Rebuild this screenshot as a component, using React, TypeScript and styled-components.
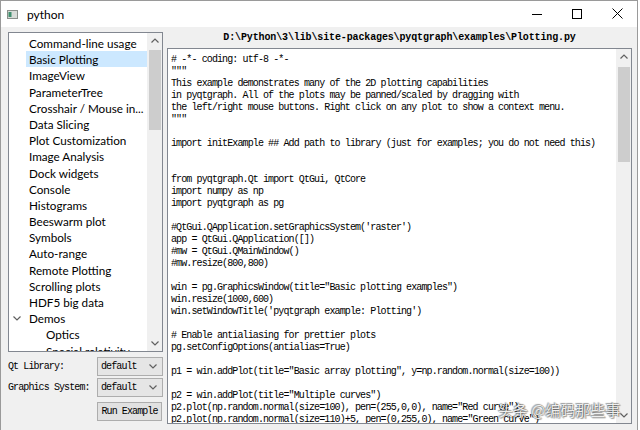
import React from 'react';
import styled, { createGlobalStyle } from 'styled-components';

const GlobalStyle = createGlobalStyle`
  html, body {
    margin: 0;
    padding: 0;
    background: #ffffff;
    overflow: hidden;
  }
`;

const treeItems = [
  { label: 'Command-line usage', depth: 0 },
  { label: 'Basic Plotting', depth: 0, selected: true },
  { label: 'ImageView', depth: 0 },
  { label: 'ParameterTree', depth: 0 },
  { label: 'Crosshair / Mouse in...', depth: 0 },
  { label: 'Data Slicing', depth: 0 },
  { label: 'Plot Customization', depth: 0 },
  { label: 'Image Analysis', depth: 0 },
  { label: 'Dock widgets', depth: 0 },
  { label: 'Console', depth: 0 },
  { label: 'Histograms', depth: 0 },
  { label: 'Beeswarm plot', depth: 0 },
  { label: 'Symbols', depth: 0 },
  { label: 'Auto-range', depth: 0 },
  { label: 'Remote Plotting', depth: 0 },
  { label: 'Scrolling plots', depth: 0 },
  { label: 'HDF5 big data', depth: 0 },
  { label: 'Demos', depth: 0, expanded: true },
  { label: 'Optics', depth: 1 },
  { label: 'Special relativity', depth: 1 },
];

const codeLines = [
  '# -*- coding: utf-8 -*-',
  '"""',
  'This example demonstrates many of the 2D plotting capabilities',
  'in pyqtgraph. All of the plots may be panned/scaled by dragging with',
  'the left/right mouse buttons. Right click on any plot to show a context menu.',
  '"""',
  '',
  'import initExample ## Add path to library (just for examples; you do not need this)',
  '',
  '',
  'from pyqtgraph.Qt import QtGui, QtCore',
  'import numpy as np',
  'import pyqtgraph as pg',
  '',
  "#QtGui.QApplication.setGraphicsSystem('raster')",
  'app = QtGui.QApplication([])',
  '#mw = QtGui.QMainWindow()',
  '#mw.resize(800,800)',
  '',
  'win = pg.GraphicsWindow(title="Basic plotting examples")',
  'win.resize(1000,600)',
  "win.setWindowTitle('pyqtgraph example: Plotting')",
  '',
  '# Enable antialiasing for prettier plots',
  'pg.setConfigOptions(antialias=True)',
  '',
  'p1 = win.addPlot(title="Basic array plotting", y=np.random.normal(size=100))',
  '',
  'p2 = win.addPlot(title="Multiple curves")',
  'p2.plot(np.random.normal(size=100), pen=(255,0,0), name="Red curve")',
  'p2.plot(np.random.normal(size=110)+5, pen=(0,255,0), name="Green curve")',
];

const Chevron = ({ up }: { up?: boolean }) => (
  <svg width="8" height="5" viewBox="0 0 8 5">
    <polyline
      points={up ? '0.5,4.5 4,1 7.5,4.5' : '0.5,0.5 4,4 7.5,0.5'}
      fill="none"
      stroke="#606060"
      strokeWidth="1.2"
    />
  </svg>
);

const ScrollBar = ({ thumbTop, thumbHeight }: { thumbTop: number; thumbHeight: number }) => (
  <Scroll>
    <ScrollArrow>
      <Chevron up />
    </ScrollArrow>
    <Track>
      <Thumb style={{ marginTop: thumbTop, height: thumbHeight }} />
    </Track>
    <ScrollArrow>
      <Chevron />
    </ScrollArrow>
  </Scroll>
);

export default function App() {
  return (
    <>
      <GlobalStyle />
      <Frame>
        <TitleBar>
          <AppIcon width="11" height="9" viewBox="0 0 11 9">
            <rect x="0.5" y="0.5" width="10" height="8" fill="#d8dcd8" stroke="#8a8f8a" />
            <rect x="1.5" y="2" width="3" height="5" fill="#3f8f6f" />
          </AppIcon>
          <Title>python</Title>
          <Controls>
            <CtrlButton>
              <svg width="10" height="10" viewBox="0 0 10 10">
                <line x1="0" y1="5.5" x2="10" y2="5.5" stroke="#000" strokeWidth="1" />
              </svg>
            </CtrlButton>
            <CtrlButton>
              <svg width="10" height="10" viewBox="0 0 10 10">
                <rect x="0.5" y="0.5" width="9" height="9" fill="none" stroke="#000" strokeWidth="1" />
              </svg>
            </CtrlButton>
            <CtrlButton>
              <svg width="11" height="11" viewBox="0 0 11 11">
                <line x1="0.5" y1="0.5" x2="10.5" y2="10.5" stroke="#000" strokeWidth="1" />
                <line x1="10.5" y1="0.5" x2="0.5" y2="10.5" stroke="#000" strokeWidth="1" />
              </svg>
            </CtrlButton>
          </Controls>
        </TitleBar>
        <Body>
          <Sidebar>
            <Tree>
              <TreeList>
                {treeItems.map((item) => (
                  <TreeRow key={item.label} $depth={item.depth}>
                    <Branch>{item.expanded && <Chevron />}</Branch>
                    <TreeLabel $selected={!!item.selected}>{item.label}</TreeLabel>
                  </TreeRow>
                ))}
              </TreeList>
              <ScrollBar thumbTop={2} thumbHeight={80} />
            </Tree>
            <FormRow $gap={5}>
              <FieldLabel>Qt Library:</FieldLabel>
              <Combo>
                default
                <Chevron />
              </Combo>
            </FormRow>
            <FormRow $gap={2}>
              <FieldLabel>Graphics System:</FieldLabel>
              <Combo>
                default
                <Chevron />
              </Combo>
            </FormRow>
            <RunButton>Run Example</RunButton>
          </Sidebar>
          <Main>
            <PathHeader>D:\Python\3\lib\site-packages\pyqtgraph\examples\Plotting.py</PathHeader>
            <Editor>
              <Code>
                {codeLines.map((line, i) => (
                  <CodeLine key={i}>{line}</CodeLine>
                ))}
              </Code>
              <ScrollBar thumbTop={3} thumbHeight={95} />
            </Editor>
          </Main>
        </Body>
        <Watermark>头条 @编码那些事</Watermark>
      </Frame>
    </>
  );
}

const Frame = styled.div`
  position: relative;
  width: 638px;
  height: 430px;
  box-sizing: border-box;
  border: 1px solid #9a9a9a;
  border-bottom: none;
  display: flex;
  flex-direction: column;
  background: #f0f0f0;
  overflow: hidden;
`;

const TitleBar = styled.div`
  height: 26px;
  flex-shrink: 0;
  background: #ffffff;
  display: flex;
  align-items: center;
  padding-left: 6px;
`;

const AppIcon = styled.svg`
  margin-right: 9px;
  margin-top: 1px;
`;

const Title = styled.span`
  font-family: Lato, 'Noto Sans', sans-serif;
  font-size: 12px;
  color: #000;
`;

const Controls = styled.div`
  margin-left: auto;
  display: flex;
  height: 100%;
`;

const CtrlButton = styled.div`
  width: 40px;
  display: flex;
  align-items: center;
  justify-content: center;
  margin-top: -1px;
`;

const Body = styled.div`
  flex: 1;
  display: flex;
  gap: 4px;
  padding: 0 5px 6px 7px;
  min-height: 0;
`;

const Sidebar = styled.div`
  width: 155px;
  flex-shrink: 0;
  padding-top: 5px;
  display: flex;
  flex-direction: column;
`;

const Tree = styled.div`
  height: 320px;
  box-sizing: border-box;
  border: 1px solid #828790;
  background: #ffffff;
  display: flex;
`;

const TreeList = styled.div`
  flex: 1;
  padding-top: 2px;
  overflow: hidden;
`;

const TreeRow = styled.div<{ $depth: number }>`
  height: 16.2px;
  display: flex;
  padding-left: ${(p) => p.$depth * 17}px;
`;

const Branch = styled.div`
  width: 17px;
  flex-shrink: 0;
  display: flex;
  align-items: center;
  justify-content: center;
  padding-right: 2px;
  box-sizing: border-box;
`;

const TreeLabel = styled.div<{ $selected: boolean }>`
  flex: 1;
  padding-left: 3px;
  font-family: Lato, 'Noto Sans', sans-serif;
  font-size: 11.7px;
  line-height: 16px;
  color: #000;
  white-space: nowrap;
  overflow: hidden;
  background: ${(p) => (p.$selected ? '#cce8ff' : 'transparent')};
`;

const Scroll = styled.div`
  width: 15px;
  flex-shrink: 0;
  background: #f0f0f0;
  display: flex;
  flex-direction: column;
`;

const ScrollArrow = styled.div`
  height: 15px;
  display: flex;
  align-items: center;
  justify-content: center;
`;

const Track = styled.div`
  flex: 1;
  display: flex;
  flex-direction: column;
  align-items: center;
  min-height: 0;
`;

const Thumb = styled.div`
  width: 12px;
  background: #cdcdcd;
`;

const FormRow = styled.div<{ $gap: number }>`
  margin-top: ${(p) => p.$gap}px;
  display: flex;
  align-items: center;
  justify-content: space-between;
`;

const monoText = `
  font-family: 'Liberation Mono', 'DejaVu Sans Mono', monospace;
  font-size: 10px;
  letter-spacing: -0.9px;
  color: #000;
  white-space: pre;
`;

const FieldLabel = styled.span`
  ${monoText}
`;

const Combo = styled.div`
  ${monoText}
  width: 66px;
  height: 19px;
  box-sizing: border-box;
  border: 1px solid #adadad;
  background: #e5e5e5;
  display: flex;
  align-items: center;
  justify-content: space-between;
  padding: 0 5px 0 3px;
`;

const RunButton = styled.div`
  ${monoText}
  align-self: flex-end;
  margin-top: 5px;
  margin-right: 1px;
  width: 65px;
  height: 19px;
  box-sizing: border-box;
  border: 1px solid #adadad;
  background: #e1e1e1;
  display: flex;
  align-items: center;
  justify-content: center;
`;

const Main = styled.div`
  flex: 1;
  display: flex;
  flex-direction: column;
  min-width: 0;
`;

const PathHeader = styled.div`
  height: 21px;
  line-height: 21px;
  text-align: center;
  font-family: 'Liberation Mono', 'DejaVu Sans Mono', monospace;
  font-size: 10px;
  font-weight: bold;
  letter-spacing: -0.13px;
  color: #000;
  white-space: pre;
`;

const Editor = styled.div`
  flex: 1;
  border: 1px solid #828790;
  background: #ffffff;
  display: flex;
  min-height: 0;
`;

const Code = styled.div`
  flex: 1;
  padding: 5px 0 0 3px;
  overflow: hidden;
`;

const CodeLine = styled.div`
  ${monoText}
  letter-spacing: -0.89px;
  height: 12px;
  line-height: 12px;
`;

const Watermark = styled.div`
  position: absolute;
  left: 497px;
  top: 399px;
  font-family: 'Noto Sans CJK SC', sans-serif;
  font-size: 15px;
  line-height: 20px;
  color: rgba(255, 255, 255, 0.92);
  white-space: nowrap;
  text-shadow: 0 0 1px rgba(0, 0, 0, 0.7), 1px 1px 1px rgba(0, 0, 0, 0.35),
    -1px -1px 1px rgba(0, 0, 0, 0.35);
`;
